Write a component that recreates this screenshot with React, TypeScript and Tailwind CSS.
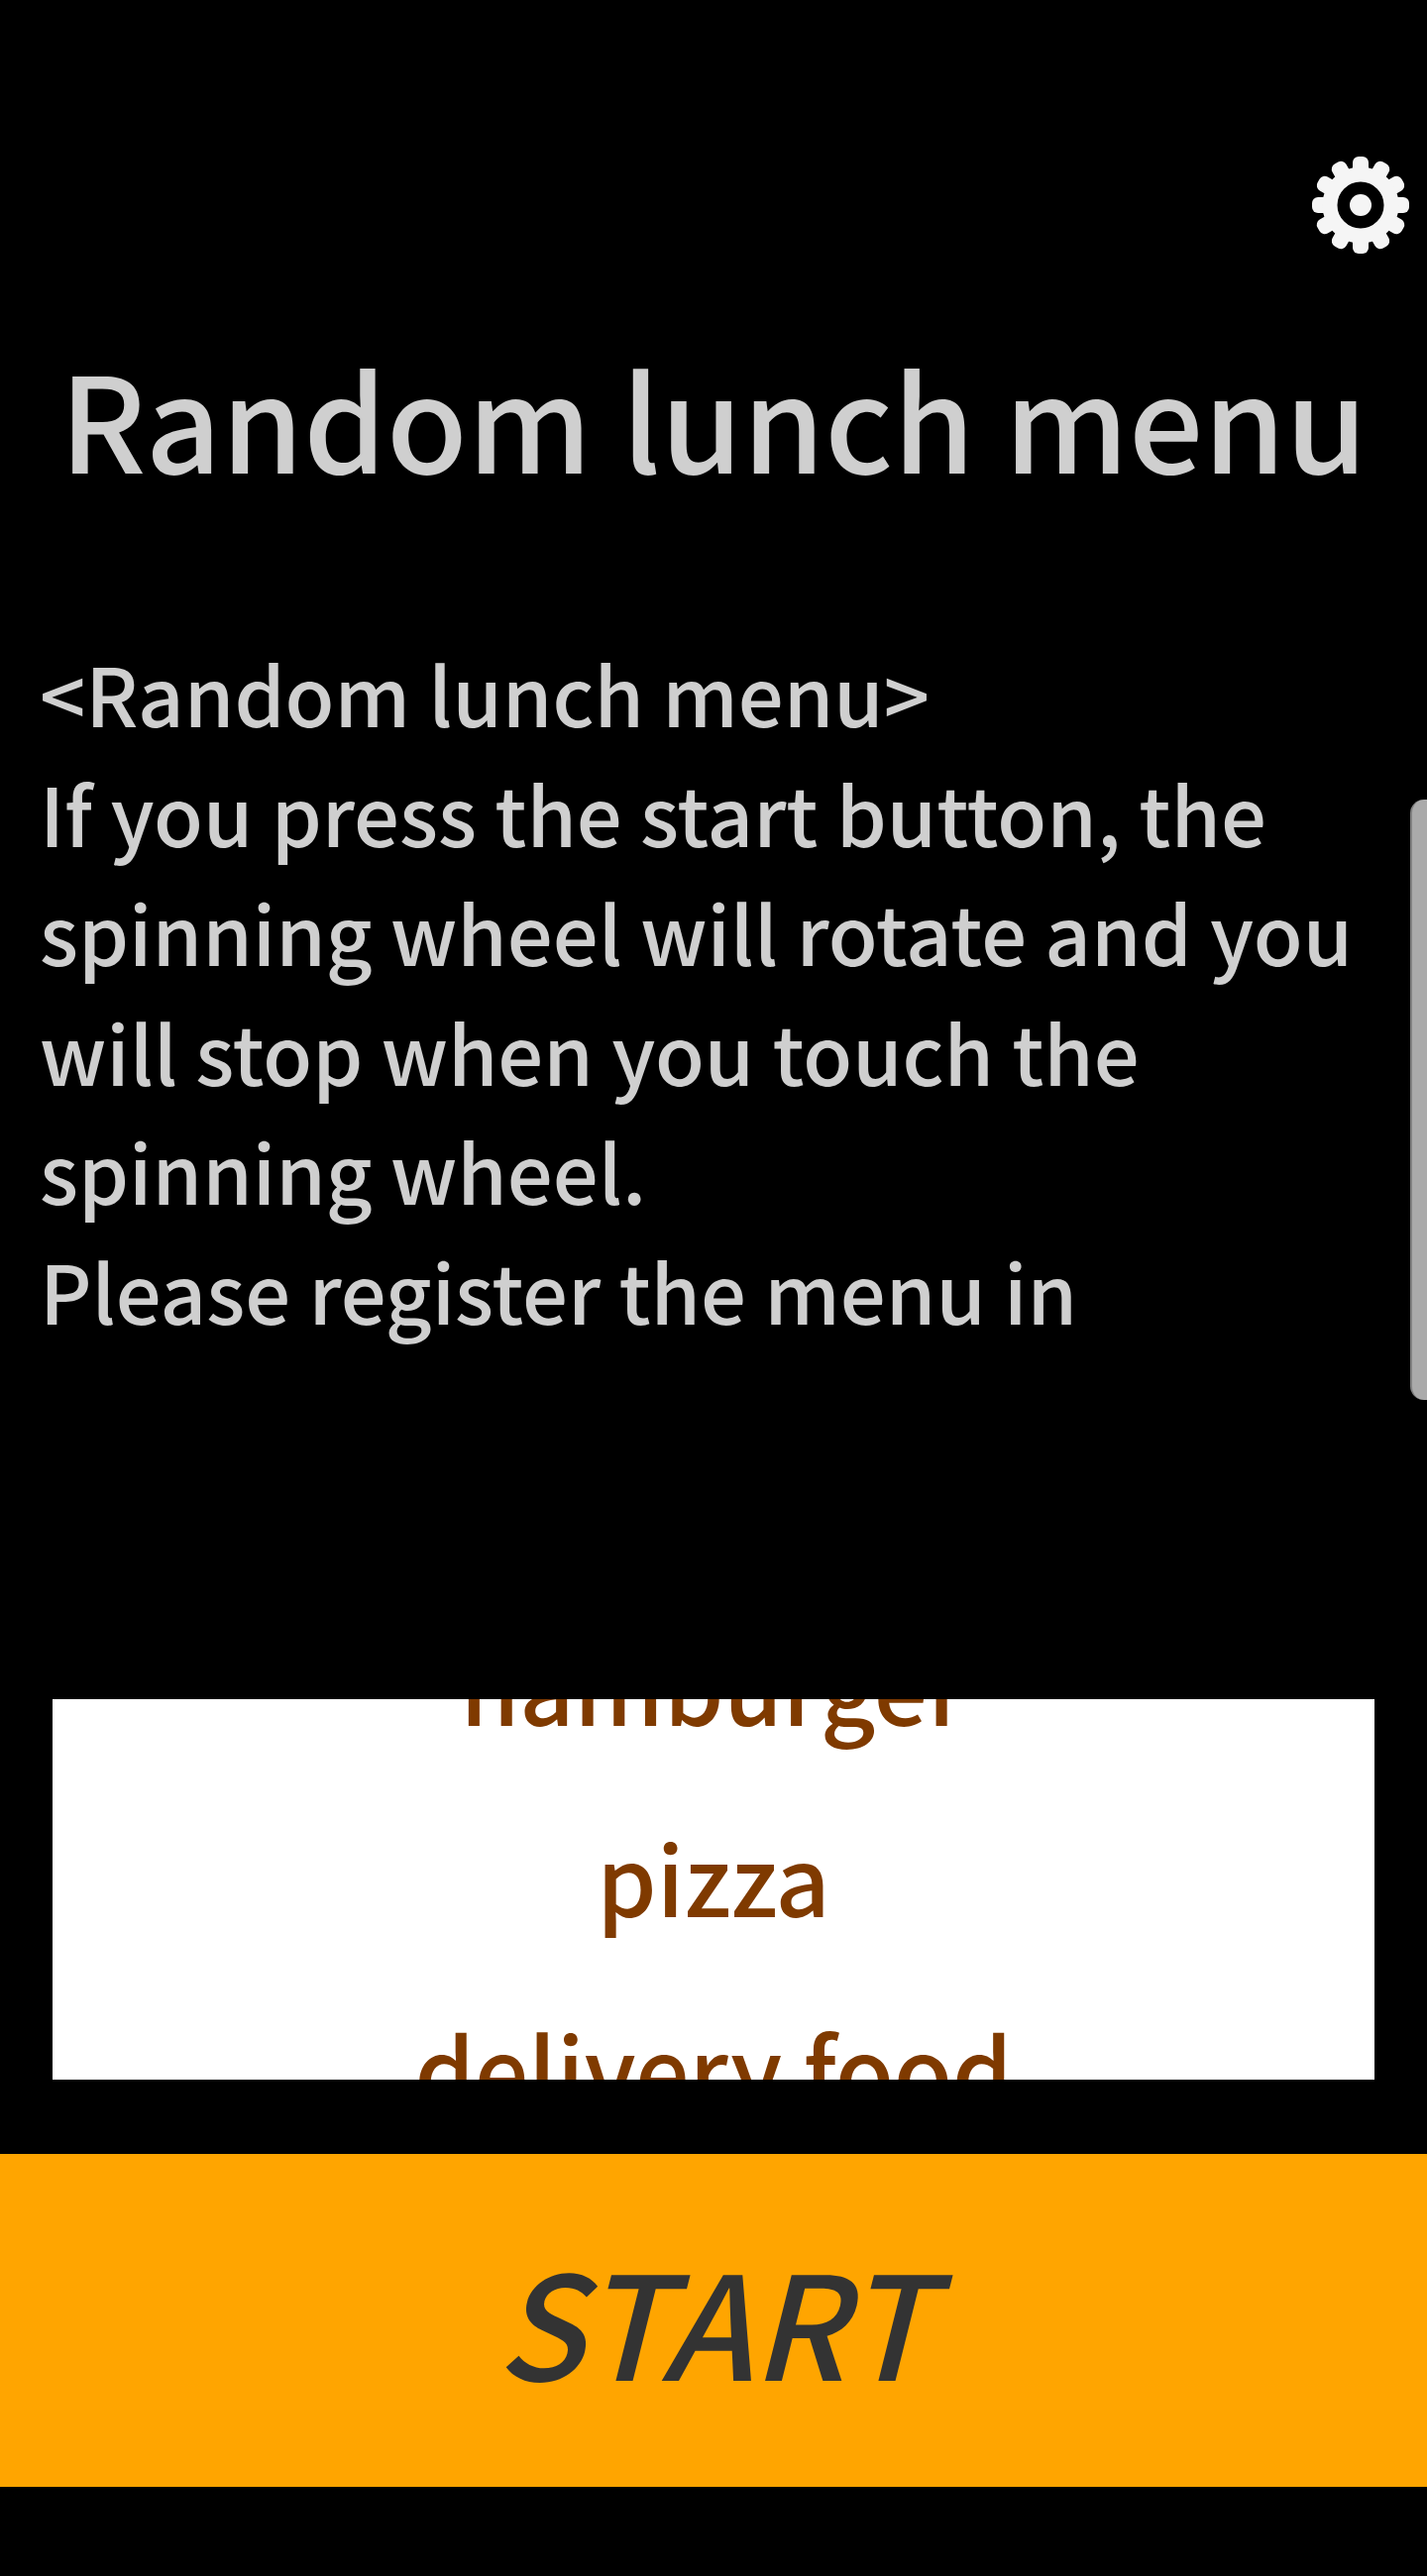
const fontStack = { fontFamily: '"Noto Sans CJK KR", "Noto Sans", sans-serif' };

const menuItems = ["hamburger", "pizza", "delivery food"];
const teeth = [0, 30, 60, 90, 120, 150, 180, 210, 240, 270, 300, 330];

const Gear = () => (
  <svg width="104" height="104" viewBox="0 0 104 104" fill="none">
    {teeth.map((deg) => (
      <rect
        key={deg}
        x="44"
        y="3"
        width="16"
        height="24"
        rx="6"
        fill="#f5f5f5"
        transform={`rotate(${deg} 52 52)`}
      />
    ))}
    <circle cx="52" cy="52" r="31" fill="none" stroke="#f5f5f5" strokeWidth="15" />
    <circle cx="52" cy="52" r="11" fill="#f5f5f5" />
  </svg>
);

export default function App() {
  return (
    <div className="relative h-[2600px] w-[1440px] overflow-hidden bg-black" style={fontStack}>
      {/* Settings */}
      <div className="flex justify-end pt-[155px] pr-[15px]">
        <Gear />
      </div>

      {/* Title */}
      <h1 className="mt-[71px] text-center text-[133px] leading-[180px] font-medium text-[#cfcfcf]">
        Random lunch menu
      </h1>

      {/* Description */}
      <div className="mt-[129px] h-[1026px] pl-[40px] pr-[40px] text-[81.2px] leading-[120.5px] font-medium text-[#cfcfcf]">
        <p>&lt;Random lunch menu&gt;</p>
        <p>If you press the start button, the spinning wheel will rotate and you will stop when you touch the spinning wheel.</p>
        <p>Please register the menu in</p>
      </div>

      {/* Wheel */}
      <div className="mx-[53px] mt-[50px] h-[384px] overflow-hidden bg-white">
        <div className="-mt-[111px] flex flex-col items-center text-[96px] leading-[193px] font-medium text-[#7f3a00]">
          {menuItems.map((item) => (
            <div key={item}>{item}</div>
          ))}
        </div>
      </div>

      {/* Start button */}
      <button className="mt-[75px] flex h-[336px] w-full items-center justify-center bg-[#ffa500] pb-[3px] text-[145px] font-medium text-[#333333] italic">
        START
      </button>

      {/* Edge handle */}
      <div className="absolute top-[807px] right-0 h-[606px] w-[17px] rounded-l-[14px] border-l-2 border-[#808080] bg-[#aaaaaa]" />
    </div>
  );
}
